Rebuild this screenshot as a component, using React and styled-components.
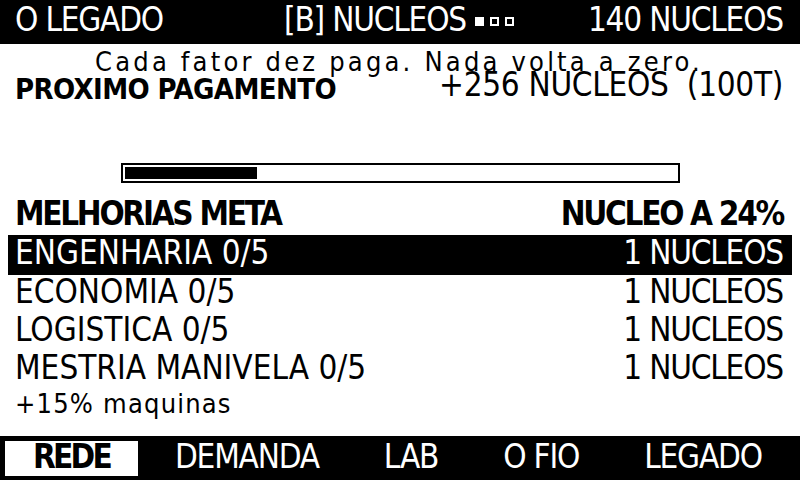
import React from "react";
import styled, { createGlobalStyle } from "styled-components";

const Global = createGlobalStyle`
  html, body { margin: 0; padding: 0; background: #fff; }
  body { width: 800px; height: 480px; overflow: hidden; }
  * { box-sizing: border-box; }
`;

const FONT = `"DejaVu Sans Condensed", "DejaVu Sans", sans-serif`;

const Screen = styled.div`
  width: 800px;
  height: 480px;
  display: flex;
  flex-direction: column;
  background: #fff;
  color: #000;
  font-family: ${FONT};
  font-stretch: condensed;
`;

const TopBar = styled.header`
  height: 44px;
  background: #000;
  color: #fff;
  display: grid;
  grid-template-columns: 1fr auto 1fr;
  align-items: center;
  padding: 0 17px 6px 15px;
  font-size: 33px;
  font-weight: 500;
  letter-spacing: -1.2px;
  line-height: 1;
`;

const TopLeft = styled.span`
  justify-self: start;
`;
const TopCenter = styled.span`
  display: flex;
  align-items: center;
`;
const TopRight = styled.span`
  justify-self: end;
`;

const Dots = styled.span`
  display: flex;
  gap: 6px;
  margin-left: 9px;
  margin-top: 4px;
`;

const Dot = styled.span`
  width: 9px;
  height: 9px;
  border: 2px solid #fff;
  background: ${(p) => (p.$on ? "#fff" : "#000")};
`;

const Main = styled.main`
  flex: 1;
  display: flex;
  flex-direction: column;
  padding: 0 17px 0 15px;
`;

const Tagline = styled.div`
  margin-top: 5px;
  height: 25px;
  text-align: center;
  font-size: 27px;
  line-height: 25px;
  font-weight: 200;
  letter-spacing: 3.2px;
`;

const PayRow = styled.div`
  display: flex;
  justify-content: space-between;
  align-items: flex-start;
  height: 26px;
  line-height: 22px;
`;

const PayLabel = styled.span`
  margin-top: 4px;
  font-size: 29px;
  font-weight: 700;
  letter-spacing: -0.6px;
`;

const PayValue = styled.span`
  font-size: 33px;
  font-weight: 200;
  letter-spacing: -0.3px;
  white-space: pre;
`;

const Track = styled.div`
  margin: 63px 0 0 106px;
  width: 559px;
  height: 20px;
  border: 2px solid #000;
  padding: 2px;
`;

const Fill = styled.div`
  height: 100%;
  background: #000;
`;

const SectionHead = styled.div`
  margin-top: 11px;
  height: 41px;
  padding-bottom: 3px;
  display: flex;
  justify-content: space-between;
  align-items: center;
  font-size: 33px;
  font-weight: 700;
  letter-spacing: -2.3px;
`;

const List = styled.div`
  display: flex;
  flex-direction: column;
  margin: 0 -9px 0 -7px;
`;

const Row = styled.div`
  height: ${(p) => (p.$active ? 40 : 38)}px;
  display: flex;
  justify-content: space-between;
  align-items: center;
  padding: 0 9px 6px 7px;
  font-size: 33px;
  font-weight: 200;
  letter-spacing: 0px;
  background: ${(p) => (p.$active ? "#000" : "transparent")};
  color: ${(p) => (p.$active ? "#fff" : "#000")};
`;

const Cost = styled.span`
  letter-spacing: -1.2px;
`;

const Note = styled.div`
  font-size: 27px;
  font-weight: 200;
  letter-spacing: 1.2px;
  line-height: 30px;
`;

const NavBar = styled.nav`
  height: 44px;
  background: #000;
  display: flex;
  align-items: center;
  gap: 9px;
  padding: 0 5px;
`;

const Tab = styled.span`
  height: 35px;
  padding: 0 28px 4px;
  display: flex;
  align-items: center;
  font-size: 33px;
  letter-spacing: ${(p) => (p.$active ? -2.8 : -1.2)}px;
  font-weight: ${(p) => (p.$active ? 700 : 200)};
  background: ${(p) => (p.$active ? "#fff" : "#000")};
  color: ${(p) => (p.$active ? "#000" : "#fff")};
`;

const upgrades = [
  { name: "ENGENHARIA 0/5", cost: "1 NUCLEOS" },
  { name: "ECONOMIA 0/5", cost: "1 NUCLEOS" },
  { name: "LOGISTICA 0/5", cost: "1 NUCLEOS" },
  { name: "MESTRIA MANIVELA 0/5", cost: "1 NUCLEOS" },
];

const tabs = ["REDE", "DEMANDA", "LAB", "O FIO", "LEGADO"];

export default function App() {
  const progress = 24;
  return (
    <>
      <Global />
      <Screen>
        <TopBar>
          <TopLeft>O LEGADO</TopLeft>
          <TopCenter>
            [B] NUCLEOS
            <Dots>
              <Dot $on />
              <Dot />
              <Dot />
            </Dots>
          </TopCenter>
          <TopRight>140 NUCLEOS</TopRight>
        </TopBar>
        <Main>
          <Tagline>Cada fator dez paga. Nada volta a zero.</Tagline>
          <PayRow>
            <PayLabel>PROXIMO PAGAMENTO</PayLabel>
            <PayValue>{"+256 NUCLEOS  (100T)"}</PayValue>
          </PayRow>
          <Track>
            <Fill style={{ width: `${progress}%` }} />
          </Track>
          <SectionHead>
            <span>MELHORIAS META</span>
            <span>NUCLEO A 24%</span>
          </SectionHead>
          <List>
            {upgrades.map((u, i) => (
              <Row key={u.name} $active={i === 0}>
                <span>{u.name}</span>
                <Cost>{u.cost}</Cost>
              </Row>
            ))}
          </List>
          <Note>+15% maquinas</Note>
        </Main>
        <NavBar>
          {tabs.map((t, i) => (
            <Tab key={t} $active={i === 0}>
              {t}
            </Tab>
          ))}
        </NavBar>
      </Screen>
    </>
  );
}
